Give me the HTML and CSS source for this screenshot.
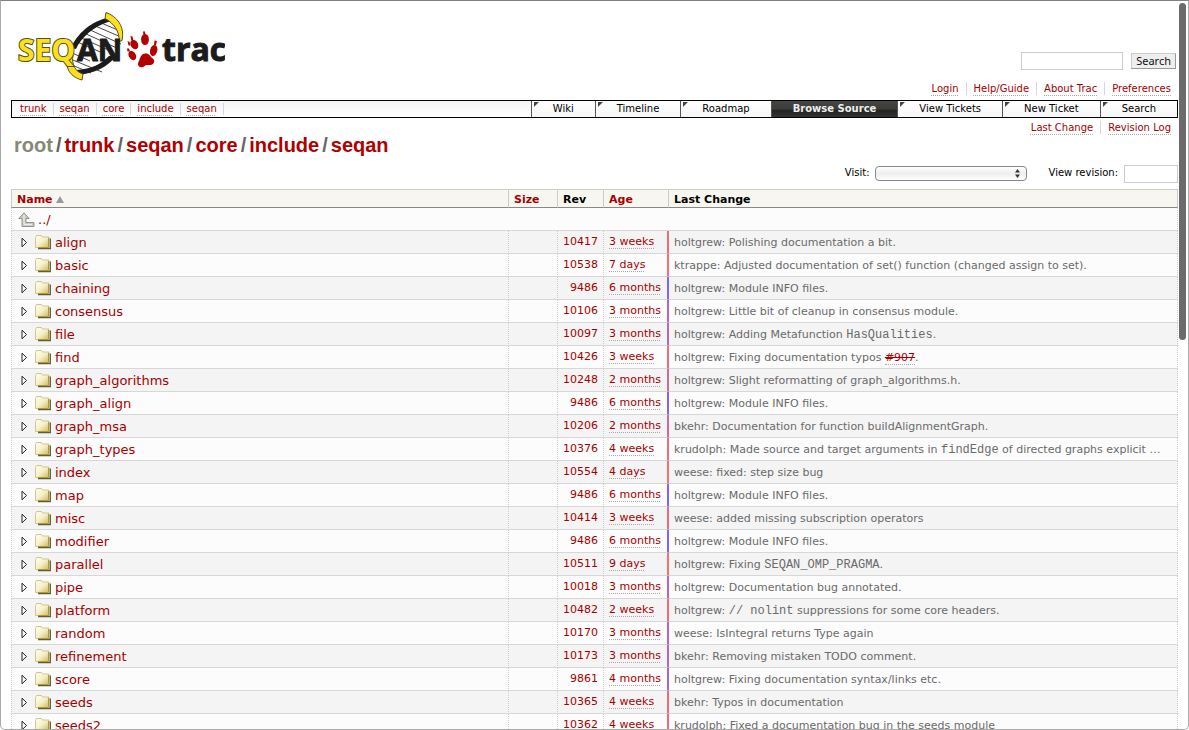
FILE: index.html
```html
<!DOCTYPE html>
<html lang="en">
<head>
<meta charset="utf-8">
<title>seqan in trunk/seqan/core/include – SeqAn</title>
<link rel="stylesheet" href="styles.css">
</head>
<body>
<svg class="sprite" aria-hidden="true">
  <defs>
    <linearGradient id="paper" x1="0" y1="0" x2="1" y2="1"><stop offset="0" stop-color="#fffef4"/><stop offset=".5" stop-color="#f6f0c8"/><stop offset="1" stop-color="#cdb95c"/></linearGradient>
    <symbol id="folder" viewBox="0 0 16 16">
      <path d="M3 14.500h12.200V4.500" fill="none" stroke="#5c5c44" stroke-width="1.500"/>
      <path d="M.5 13.500v-10l1-2h5l1 1.500h6.500v10.500z" fill="url(#paper)" stroke="#d0c68e"/>
      <path d="M13.500 4v9.500H3" fill="none" stroke="#b49a2c"/>
    </symbol>
    <symbol id="open" viewBox="0 0 7 11"><path d="M1 1.200v8.600l4.500-4.300z" fill="#fff" stroke="#222"/></symbol>
  </defs>
</svg>
<div class="page">
  <header class="banner">
    <a class="logo" href="#" aria-label="SeqAn trac">
      <svg width="208" height="70" viewBox="17 12 208 70">
        <path d="M108 17C86 22 72 38 68 56c-1 8 1 16 8 21 20-3 38-14 44-30 3-9 2-21-12-30z" fill="#fff"/>
        <g stroke="#333" stroke-width=".9"><path d="M99 22l21 9M93 25l28 12M88 29l33 15M84 33l35 16M79 37l34 15M75 41l30 13M70 52l20 9M68 58l34 14M67 63l24 10M69 68l14 6"/></g>
        <path d="M109 17.500C91 21 77 34 71 48l5 1c5-11 17-23 35-28z" fill="#1c1c1c"/>
        <path d="M77 75c17-1 32-9 39-19h-7c-8 8-17 13-33 14z" fill="#1c1c1c"/>
        <path d="M106 12.500c11 4 19 14 16 28l-3 1c1-8-4-18-14-23z" fill="#fbe022" stroke="#555016"/>
        <path d="M70 54c-7 11-1 23 12 26l1-6c-7-2-12-9-10-19z" fill="#fbe022" stroke="#555016"/>
        <text class="logo-seq" x="18" y="61">SEQ</text>
        <text class="logo-an" x="77" y="61">AN</text>
        <g fill="#b30000">
          <ellipse cx="134.300" cy="44.500" rx="3.700" ry="5" transform="rotate(-28 134.300 44.500)"/>
          <ellipse cx="145" cy="39.500" rx="3.900" ry="5.500"/>
          <ellipse cx="153.700" cy="50.500" rx="3.600" ry="5.600" transform="rotate(14 153.700 50.500)"/>
          <ellipse cx="132.300" cy="55.500" rx="3.500" ry="5" transform="rotate(-30 132.300 55.500)"/>
          <path d="M130.500 36l2 .5.700 3.500h-2zM143 31.500h2l.6 4.500h-2zM154.500 40.500l2.500.5-1 4h-2zM127.500 41l2 1 1 3.500h-2zM127 48.500h2l1 3h-2.500z"/>
          <path d="M144 53.800c5-1.300 6 2.200 7.500 3.700s3.500 2 2.500 5-4 2.500-7 2.500c-2 0-3 2.500-6 2.200-3.500-.4-3.500-4-2-6.200 1-1.500 1-6 5-7.200z"/>
        </g>
        <text class="logo-trac" x="162" y="61">trac</text>
      </svg>
    </a>
    <div class="tools">
      <form class="search"><input type="text" aria-label="Search text"><button type="button">Search</button></form>
      <nav class="links"><a href="#">Login</a><a href="#">Help/Guide</a><a href="#">About Trac</a><a href="#">Preferences</a></nav>
    </div>
  </header>
  <div class="mainbar">
    <nav class="trail"><a href="#">trunk</a><a href="#">seqan</a><a href="#">core</a><a href="#">include</a><a href="#">seqan</a></nav>
    <nav class="tabs"><a href="#">Wiki</a><a href="#">Timeline</a><a href="#">Roadmap</a><a class="active" href="#">Browse Source</a><a href="#">View Tickets</a><a href="#">New Ticket</a><a href="#">Search</a></nav>
  </div>
  <nav class="links context"><a href="#">Last Change</a><a href="#">Revision Log</a></nav>
  <h1><a class="root" href="#">root</a><span>/</span><a href="#">trunk</a><span>/</span><a href="#">seqan</a><span>/</span><a href="#">core</a><span>/</span><a href="#">include</a><span>/</span><a href="#">seqan</a></h1>
  <form class="jump">
    <label for="visit">Visit:</label>
    <span class="picker"><select id="visit"><option></option></select><svg width="5" height="9" viewBox="0 0 5 9"><path d="M0 3.500L2.500 0 5 3.500zM0 5.500L2.500 9 5 5.500z" fill="#333"/></svg></span>
    <label for="rev">View revision:</label>
    <input id="rev" type="text">
  </form>
  <table class="listing">
    <colgroup><col><col class="c-size"><col class="c-rev"><col class="c-age"><col class="c-change"></colgroup>
    <thead><tr><th><a href="#">Name <svg width="8" height="7" viewBox="0 0 8 7"><path d="M4 0l4 7H0z" fill="#999"/></svg></a></th><th><a href="#">Size</a></th><th>Rev</th><th><a href="#">Age</a></th><th>Last Change</th></tr></thead>
    <tbody>
      <tr><td class="parent" colspan="5"><a href="#"><svg width="17" height="16" viewBox="0 0 17 16"><path d="M6 .8L.8 6.500H4V14.500h12v-4H8V6.500h3.200z" fill="#c9ccc4" stroke="#92958c"/><path d="M6 3v9.500h8" fill="none" stroke="#eee"/></svg>../</a></td></tr>
      <tr><td><div class="entry"><svg class="open"><use href="#open"/></svg><svg class="folder"><use href="#folder"/></svg><a href="#">align</a></div></td><td></td><td><a href="#">10417</a></td><td class="weeks"><a href="#">3 weeks</a></td><td>holtgrew: Polishing documentation a bit.</td></tr>
      <tr><td><div class="entry"><svg class="open"><use href="#open"/></svg><svg class="folder"><use href="#folder"/></svg><a href="#">basic</a></div></td><td></td><td><a href="#">10538</a></td><td class="days"><a href="#">7 days</a></td><td>ktrappe: Adjusted documentation of set() function (changed assign to set).</td></tr>
      <tr><td><div class="entry"><svg class="open"><use href="#open"/></svg><svg class="folder"><use href="#folder"/></svg><a href="#">chaining</a></div></td><td></td><td><a href="#">9486</a></td><td class="m6"><a href="#">6 months</a></td><td>holtgrew: Module INFO files.</td></tr>
      <tr><td><div class="entry"><svg class="open"><use href="#open"/></svg><svg class="folder"><use href="#folder"/></svg><a href="#">consensus</a></div></td><td></td><td><a href="#">10106</a></td><td class="m3"><a href="#">3 months</a></td><td>holtgrew: Little bit of cleanup in consensus module.</td></tr>
      <tr><td><div class="entry"><svg class="open"><use href="#open"/></svg><svg class="folder"><use href="#folder"/></svg><a href="#">file</a></div></td><td></td><td><a href="#">10097</a></td><td class="m3"><a href="#">3 months</a></td><td>holtgrew: Adding Metafunction <code>HasQualities</code>.</td></tr>
      <tr><td><div class="entry"><svg class="open"><use href="#open"/></svg><svg class="folder"><use href="#folder"/></svg><a href="#">find</a></div></td><td></td><td><a href="#">10426</a></td><td class="weeks"><a href="#">3 weeks</a></td><td>holtgrew: Fixing documentation typos <a class="closed" href="#">#907</a>.</td></tr>
      <tr><td><div class="entry"><svg class="open"><use href="#open"/></svg><svg class="folder"><use href="#folder"/></svg><a href="#">graph_algorithms</a></div></td><td></td><td><a href="#">10248</a></td><td class="m2"><a href="#">2 months</a></td><td>holtgrew: Slight reformatting of graph_algorithms.h.</td></tr>
      <tr><td><div class="entry"><svg class="open"><use href="#open"/></svg><svg class="folder"><use href="#folder"/></svg><a href="#">graph_align</a></div></td><td></td><td><a href="#">9486</a></td><td class="m6"><a href="#">6 months</a></td><td>holtgrew: Module INFO files.</td></tr>
      <tr><td><div class="entry"><svg class="open"><use href="#open"/></svg><svg class="folder"><use href="#folder"/></svg><a href="#">graph_msa</a></div></td><td></td><td><a href="#">10206</a></td><td class="m2"><a href="#">2 months</a></td><td>bkehr: Documentation for function buildAlignmentGraph.</td></tr>
      <tr><td><div class="entry"><svg class="open"><use href="#open"/></svg><svg class="folder"><use href="#folder"/></svg><a href="#">graph_types</a></div></td><td></td><td><a href="#">10376</a></td><td class="weeks"><a href="#">4 weeks</a></td><td>krudolph: Made source and target arguments in <code>findEdge</code> of directed graphs explicit …</td></tr>
      <tr><td><div class="entry"><svg class="open"><use href="#open"/></svg><svg class="folder"><use href="#folder"/></svg><a href="#">index</a></div></td><td></td><td><a href="#">10554</a></td><td class="days"><a href="#">4 days</a></td><td>weese: fixed: step size bug</td></tr>
      <tr><td><div class="entry"><svg class="open"><use href="#open"/></svg><svg class="folder"><use href="#folder"/></svg><a href="#">map</a></div></td><td></td><td><a href="#">9486</a></td><td class="m6"><a href="#">6 months</a></td><td>holtgrew: Module INFO files.</td></tr>
      <tr><td><div class="entry"><svg class="open"><use href="#open"/></svg><svg class="folder"><use href="#folder"/></svg><a href="#">misc</a></div></td><td></td><td><a href="#">10414</a></td><td class="weeks"><a href="#">3 weeks</a></td><td>weese: added missing subscription operators</td></tr>
      <tr><td><div class="entry"><svg class="open"><use href="#open"/></svg><svg class="folder"><use href="#folder"/></svg><a href="#">modifier</a></div></td><td></td><td><a href="#">9486</a></td><td class="m6"><a href="#">6 months</a></td><td>holtgrew: Module INFO files.</td></tr>
      <tr><td><div class="entry"><svg class="open"><use href="#open"/></svg><svg class="folder"><use href="#folder"/></svg><a href="#">parallel</a></div></td><td></td><td><a href="#">10511</a></td><td class="days"><a href="#">9 days</a></td><td>holtgrew: Fixing <code>SEQAN_OMP_PRAGMA</code>.</td></tr>
      <tr><td><div class="entry"><svg class="open"><use href="#open"/></svg><svg class="folder"><use href="#folder"/></svg><a href="#">pipe</a></div></td><td></td><td><a href="#">10018</a></td><td class="m3"><a href="#">3 months</a></td><td>holtgrew: Documentation bug annotated.</td></tr>
      <tr><td><div class="entry"><svg class="open"><use href="#open"/></svg><svg class="folder"><use href="#folder"/></svg><a href="#">platform</a></div></td><td></td><td><a href="#">10482</a></td><td class="weeks"><a href="#">2 weeks</a></td><td>holtgrew: <code>// nolint</code> suppressions for some core headers.</td></tr>
      <tr><td><div class="entry"><svg class="open"><use href="#open"/></svg><svg class="folder"><use href="#folder"/></svg><a href="#">random</a></div></td><td></td><td><a href="#">10170</a></td><td class="m3"><a href="#">3 months</a></td><td>weese: IsIntegral returns Type again</td></tr>
      <tr><td><div class="entry"><svg class="open"><use href="#open"/></svg><svg class="folder"><use href="#folder"/></svg><a href="#">refinement</a></div></td><td></td><td><a href="#">10173</a></td><td class="m3"><a href="#">3 months</a></td><td>bkehr: Removing mistaken TODO comment.</td></tr>
      <tr><td><div class="entry"><svg class="open"><use href="#open"/></svg><svg class="folder"><use href="#folder"/></svg><a href="#">score</a></div></td><td></td><td><a href="#">9861</a></td><td class="m4"><a href="#">4 months</a></td><td>holtgrew: Fixing documentation syntax/links etc.</td></tr>
      <tr><td><div class="entry"><svg class="open"><use href="#open"/></svg><svg class="folder"><use href="#folder"/></svg><a href="#">seeds</a></div></td><td></td><td><a href="#">10365</a></td><td class="weeks"><a href="#">4 weeks</a></td><td>bkehr: Typos in documentation</td></tr>
      <tr><td><div class="entry"><svg class="open"><use href="#open"/></svg><svg class="folder"><use href="#folder"/></svg><a href="#">seeds2</a></div></td><td></td><td><a href="#">10362</a></td><td class="weeks"><a href="#">4 weeks</a></td><td>krudolph: Fixed a documentation bug in the seeds module</td></tr>
    </tbody>
  </table>
</div>
<div class="scroll-thumb"></div>
<div class="window-frame"></div>
</body>
</html>
```
FILE: styles.css
```css
* { box-sizing: border-box; }
body { margin: 0; background: #fff; color: #000; font: 10px/13px "DejaVu Sans", sans-serif; }
a { color: #a60000; text-decoration: none; }
.sprite { position: absolute; width: 0; height: 0; }
.page { height: 100vh; overflow: auto; scrollbar-width: none; padding: 0 11px; }

.banner { display: flex; justify-content: space-between; align-items: flex-start; height: 100px; padding: 12px 0 0 6px; }
.logo svg { display: block; }
.logo text { font-family: "Open Sans", sans-serif; font-weight: 700; font-size: 30px; paint-order: stroke; }
.logo-seq { fill: #fbe022; stroke: #555016; stroke-width: 2; }
.logo-an { fill: #1c1c1c; stroke: #1c1c1c; stroke-width: 1; }
.logo .logo-trac { fill: #1c1c1c; font-size: 32px; stroke: #1c1c1c; stroke-width: 1; }
.tools { display: flex; flex-direction: column; align-items: flex-end; gap: 12px; padding-top: 40px; }
.search { display: flex; align-items: center; gap: 8px; padding-right: 2px; }
input { height: 18px; border: 1px solid #ccc; background: #fff; padding: 0 4px; font: inherit; }
.search input { width: 102px; }
.search button { height: 16px; padding: 0 4px; border: 1px solid #999; border-top-color: #ccc; border-left-color: #ccc; background: #eee; color: #111; font: 11px/14px "Noto Sans", sans-serif; }

.links { display: flex; }
.links a, .trail a { text-decoration: underline dotted #aaa 1px; text-underline-offset: 3px; }
.links a { padding: 0 7px; border-left: 1px solid #d7d7d7; }
.links a:first-child { border-left: 0; }

.mainbar { display: flex; justify-content: space-between; height: 18px; border: 1px solid #000; background: linear-gradient(#f4f4f4, #fff); line-height: 16px; }
.trail { display: flex; align-items: center; padding-left: 2px; line-height: 12px; }
.trail a { padding: 0 6px; border-right: 1px solid #d7d7d7; }
.tabs { display: flex; }
.tabs a { padding: 0 21px; border-left: 1px solid #555; color: #000; background: linear-gradient(135deg, #444 3px, transparent 4px) 2px 1px / 5px 5px no-repeat, linear-gradient(#fff, #f6f6f6); }
.tabs .active { color: #eee; font-weight: 700; background: linear-gradient(#444 0, #3c3c3a 50%, #20241f 60%, #333 100%); }
.context { justify-content: flex-end; padding-top: 3px; }

h1 { display: flex; gap: 3px; margin: 0; padding-left: 3px; font: 700 20px/22px "Liberation Sans", Arial, sans-serif; }
h1 a { color: #b00000; }
h1 .root { color: #888877; }
h1 span { color: #666; }

.jump { display: flex; justify-content: flex-end; align-items: center; height: 33px; padding: 2px 0 0; }
.jump label { line-height: 16px; padding-bottom: 2px; }
.picker { position: relative; margin: 0 22px 0 5px; }
.picker select { display: block; width: 152px; height: 15px; appearance: none; border: 1px solid #888; border-radius: 4px; background: linear-gradient(#fff, #eee 50%, #fff); }
.picker svg { position: absolute; right: 7px; top: 3px; }
.jump input { width: 54px; margin-left: 6px; }

.listing { width: 100%; table-layout: fixed; border-collapse: separate; border-spacing: 0; border-top: 1px solid #ccc; }
.c-size { width: 49px; }
.c-rev { width: 46px; }
.c-age { width: 66px; }
.c-change { width: 509px; }
th { height: 18px; padding: 2px 5px 0; border-left: 1px solid #ccc; border-bottom: 1px solid #888; background: #f7f7f0; text-align: left; font-size: 11px; line-height: 15px; }
th:nth-child(4) { border-right: 1px solid #ccc; }
th:last-child { border-left: 0; border-right: 1px solid #ccc; }
td { height: 23px; padding: 2px 5px 0; border-left: 1px dotted #ccc; border-bottom: 1px solid #d7d7d7; font-size: 11px; line-height: 14px; white-space: nowrap; color: #6a6a6a; }
tbody tr { background: #fcfcfc; }
tbody tr:nth-child(even) { background: #f4f4f4; }
td:last-child { border-right: 1px dotted #ccc; }
td:nth-child(3) { text-align: right; padding-top: 0; }
td:nth-child(4) { border-right: 2px solid #ee6b78; padding-top: 0; }
td:nth-child(5) { border-left: 0; }
td:nth-child(4) a { text-decoration: underline dotted #aaa 1px; text-underline-offset: 3px; }
td.weeks { border-right-color: #ee6b78; }
td.days { border-right-color: #f76f70; }
td.m2 { border-right-color: #cc6a9a; }
td.m3 { border-right-color: #b568b4; }
td.m4 { border-right-color: #9c68d2; }
td.m6 { border-right-color: #7b66f7; }
.entry { display: flex; align-items: center; padding-left: 4px; font-size: 13px; line-height: 16px; }
.entry svg { margin-bottom: 2px; }
.open { width: 7px; height: 11px; margin-right: 7px; }
.folder { width: 16px; height: 16px; margin-right: 4px; }
.parent a { display: flex; align-items: center; gap: 3px; padding-left: 1px; font-size: 13px; }
code { font-family: "Liberation Mono", monospace; font-size: 12px; line-height: 12px; }
.closed { text-decoration: line-through; border-bottom: 1px dotted #aaa; }

.scroll-thumb { position: fixed; right: 3px; top: 3px; width: 7px; height: 337px; border-radius: 4px; background: #6b6b6b; }
.window-frame { position: fixed; inset: 0; border: 1px solid #aaa; border-top-color: #808080; border-radius: 0 0 5px 5px; pointer-events: none; }
```
